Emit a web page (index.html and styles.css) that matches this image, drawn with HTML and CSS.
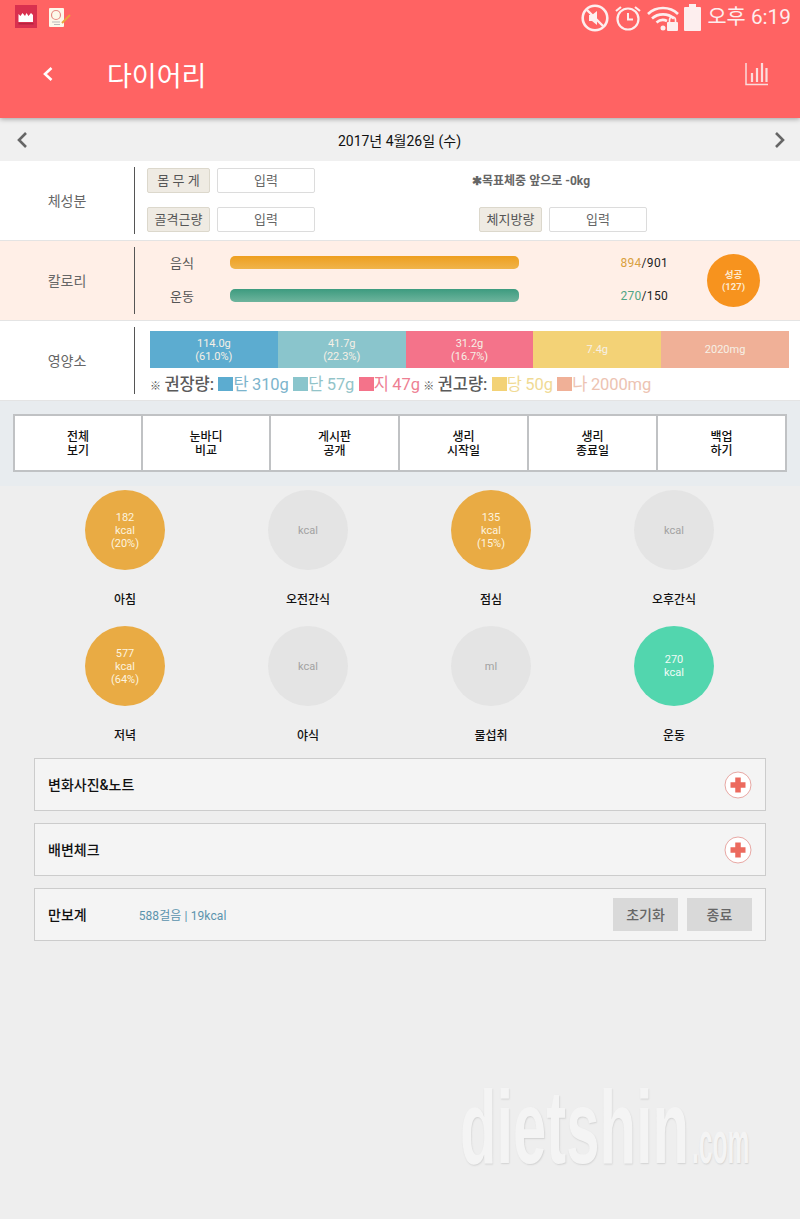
FILE: index.html
```html
<!DOCTYPE html>
<html lang="ko">
<head>
    <meta charset="UTF-8">
    <meta name="viewport" content="width=device-width, initial-scale=1.0">
    <title>다이어리</title>
    <link rel="stylesheet" href="styles.css">
</head>
<body>
    <header class="app-header">
        <div class="status-bar">
            <div class="status-left">
                <svg class="notify-crown" width="22" height="23" viewBox="0 0 22 23">
                    <rect width="22" height="23" fill="#d9304f"/>
                    <path d="M3.500 9l2 2 2-3 2.500 3 1.500-3 2 3 2.500-3 2 2v7h-14.500z" fill="#fff"/>
                    <rect x="3.500" y="18" width="15" height="1.500" fill="#b52540"/>
                </svg>
                <svg class="notify-note" width="24" height="23" viewBox="0 0 24 23">
                    <rect x="1" y="3" width="15" height="19" rx="1" fill="#fdf8ea"/>
                    <circle cx="8" cy="10" r="4.500" fill="none" stroke="#e58a84" stroke-width="1.200"/>
                    <path d="M4 17h8M6 19.500h6" stroke="#bbb" stroke-width="1"/>
                    <path d="M14 18l8-8" stroke="#e9a33c" stroke-width="2"/>
                </svg>
            </div>
            <div class="status-right">
                <svg width="28" height="28" viewBox="0 0 28 28">
                    <circle cx="14" cy="14" r="12.300" fill="none" stroke="#fdeeee" stroke-width="2.600"/>
                    <path d="M8 11h3l5-4v14l-5-4H8z" fill="#fdeeee"/>
                    <path d="M6 6l16 16" stroke="#fdeeee" stroke-width="2.400"/>
                </svg>
                <svg width="28" height="28" viewBox="0 0 28 28">
                    <circle cx="14" cy="15" r="10.500" fill="none" stroke="#fdeeee" stroke-width="2.200"/>
                    <path d="M14 9v6.500h5" fill="none" stroke="#fdeeee" stroke-width="2"/>
                    <path d="M2 7l5-4M26 7l-5-4" stroke="#fdeeee" stroke-width="2.200"/>
                </svg>
                <svg width="32" height="28" viewBox="0 0 32 28">
                    <path d="M1 10C9 2 23 2 31 10" fill="none" stroke="#fdeeee" stroke-width="2.600"/>
                    <path d="M5 14.500C11 9 21 9 27 14.500" fill="none" stroke="#fdeeee" stroke-width="2.600"/>
                    <path d="M9.500 18.500C13 15.500 17 15.500 20 17" fill="none" stroke="#fdeeee" stroke-width="2.600"/>
                    <circle cx="16" cy="24" r="2.500" fill="#fdeeee"/>
                    <rect x="20" y="18" width="11" height="9" rx="1" fill="#fdeeee"/>
                    <path d="M22.500 18v-2a3 3 0 0 1 6 0v2" fill="none" stroke="#fdeeee" stroke-width="1.600"/>
                </svg>
                <svg class="battery" width="17" height="27" viewBox="0 0 17 27">
                    <path d="M5 0h7v3h4a1 1 0 0 1 1 1v22a1 1 0 0 1-1 1H1a1 1 0 0 1-1-1V4a1 1 0 0 1 1-1h4z" fill="#fdeeee"/>
                </svg>
                <span class="clock">오후 6:19</span>
            </div>
        </div>
        <div class="toolbar">
            <svg class="back-icon" width="12" height="16" viewBox="0 0 12 16">
                <path d="M9.500 2L3 8l6.500 6" fill="none" stroke="#fff" stroke-width="2.600"/>
            </svg>
            <h1>다이어리</h1>
            <svg class="chart-icon" width="25" height="24" viewBox="0 0 25 24">
                <path d="M2 1v21.500h22" fill="none" stroke="#fbdcdc" stroke-width="1.500"/>
                <path d="M8 11v9M13 6v14M18 1v19M22.500 6v14" fill="none" stroke="#fbdcdc" stroke-width="2.200"/>
            </svg>
        </div>
    </header>

    <nav class="date-bar">
        <svg width="12" height="18" viewBox="0 0 12 18">
            <path d="M10 2L3 9l7 7" fill="none" stroke="#666" stroke-width="2.600"/>
        </svg>
        <span>2017년 4월26일 (수)</span>
        <svg width="12" height="18" viewBox="0 0 12 18">
            <path d="M2 2l7 7-7 7" fill="none" stroke="#666" stroke-width="2.600"/>
        </svg>
    </nav>

    <section class="info-row">
        <div class="row-label">체성분</div>
        <div class="body-grid">
            <div class="field">
                <span class="field-name">몸 무 게</span>
                <span class="field-input">입력</span>
            </div>
            <div class="goal-note">✱목표체중 앞으로 -0kg</div>
            <div class="field">
                <span class="field-name">골격근량</span>
                <span class="field-input">입력</span>
            </div>
            <div class="field">
                <span class="field-name">체지방량</span>
                <span class="field-input">입력</span>
            </div>
        </div>
    </section>

    <section class="info-row calorie-row">
        <div class="row-label">칼로리</div>
        <div class="calorie-bars">
            <div class="calorie-line">
                <span class="calorie-name">음식</span>
                <div class="bar bar-food"></div>
                <span class="calorie-value"><em class="food-num">894</em>/901</span>
            </div>
            <div class="calorie-line">
                <span class="calorie-name">운동</span>
                <div class="bar bar-exercise"></div>
                <span class="calorie-value"><em class="exercise-num">270</em>/150</span>
            </div>
        </div>
        <div class="success-badge">성공<br>(127)</div>
    </section>

    <section class="info-row">
        <div class="row-label">영양소</div>
        <div class="nutrients">
            <div class="nutrient-bar">
                <div class="carb">114.0g<br>(61.0%)</div>
                <div class="protein">41.7g<br>(22.3%)</div>
                <div class="fat">31.2g<br>(16.7%)</div>
                <div class="sugar">7.4g</div>
                <div class="sodium">2020mg</div>
            </div>
            <p class="legend">
                <small>※</small> <b>권장량:</b>
                <i class="swatch carb"></i><span class="t-carb">탄 310g</span>
                <i class="swatch protein"></i><span class="t-protein">단 57g</span>
                <i class="swatch fat"></i><span class="t-fat">지 47g</span>
                <small>※</small> <b>권고량:</b>
                <i class="swatch sugar"></i><span class="t-sugar">당 50g</span>
                <i class="swatch sodium"></i><span class="t-sodium">나 2000mg</span>
            </p>
        </div>
    </section>

    <section class="menu-band">
        <div class="menu-table">
            <div>전체<br>보기</div>
            <div>눈바디<br>비교</div>
            <div>게시판<br>공개</div>
            <div>생리<br>시작일</div>
            <div>생리<br>종료일</div>
            <div>백업<br>하기</div>
        </div>
    </section>

    <main class="content">
        <div class="meal-grid">
            <div class="meal">
                <div class="circle filled">182<br>kcal<br>(20%)</div>
                <span>아침</span>
            </div>
            <div class="meal">
                <div class="circle">kcal</div>
                <span>오전간식</span>
            </div>
            <div class="meal">
                <div class="circle filled">135<br>kcal<br>(15%)</div>
                <span>점심</span>
            </div>
            <div class="meal">
                <div class="circle">kcal</div>
                <span>오후간식</span>
            </div>
            <div class="meal">
                <div class="circle filled">577<br>kcal<br>(64%)</div>
                <span>저녁</span>
            </div>
            <div class="meal">
                <div class="circle">kcal</div>
                <span>야식</span>
            </div>
            <div class="meal">
                <div class="circle">ml</div>
                <span>물섭취</span>
            </div>
            <div class="meal">
                <div class="circle green">270<br>kcal</div>
                <span>운동</span>
            </div>
        </div>

        <div class="panel">
            <strong>변화사진&amp;노트</strong>
            <svg class="plus" width="28" height="28" viewBox="0 0 28 28">
                <circle cx="14" cy="14" r="13" fill="#fff" stroke="#e8a8a4" stroke-width="1"/>
                <path d="M14 6.500v15M6.500 14h15" stroke="#ec6a5e" stroke-width="5.500"/>
            </svg>
        </div>
        <div class="panel">
            <strong>배변체크</strong>
            <svg class="plus" width="28" height="28" viewBox="0 0 28 28">
                <circle cx="14" cy="14" r="13" fill="#fff" stroke="#e8a8a4" stroke-width="1"/>
                <path d="M14 6.500v15M6.500 14h15" stroke="#ec6a5e" stroke-width="5.500"/>
            </svg>
        </div>
        <div class="panel pedometer">
            <strong>만보계</strong>
            <span class="steps">588걸음 | 19kcal</span>
            <button class="gray-btn">초기화</button>
            <button class="gray-btn">종료</button>
        </div>

        <div class="watermark"><span class="wm-main">dietshin</span><span class="wm-com">.com</span></div>
    </main>
</body>
</html>
```

FILE: styles.css
```css
* {
    margin: 0;
    padding: 0;
    box-sizing: border-box;
}

body {
    width: 800px;
    height: 1219px;
    overflow: hidden;
    background: #eeeeee;
    font-family: Roboto, "Noto Sans CJK KR", sans-serif;
    color: #222;
}

/* header */
.app-header {
    position: relative;
    height: 118px;
    background: #ff6363;
    box-shadow: 0 1px 5px rgba(0,0,0,0.35);
}

.status-bar {
    display: flex;
    justify-content: space-between;
    height: 33px;
    padding: 4px 9px 0 15px;
}

.status-left {
    display: flex;
    gap: 11px;
    height: 23px;
    margin-top: 1px;
}

.status-right {
    display: flex;
    align-items: flex-start;
    gap: 5px;
    color: #fdeeee;
}

.clock {
    margin-left: 1px;
    font-size: 20.800px;
    line-height: 27px;
}

.toolbar {
    display: flex;
    align-items: center;
    height: 85px;
    padding: 0 31px 3px 42px;
}

.toolbar h1 {
    margin-left: 53px;
    font-size: 27px;
    font-weight: 400;
    color: #fff;
}

.chart-icon {
    margin-left: auto;
}

/* date */
.date-bar {
    display: flex;
    justify-content: space-between;
    align-items: center;
    height: 43px;
    padding: 1px 14px 0 16px;
    background: #f0f0f0;
    font-size: 14px;
    color: #111;
}

.date-bar span {
    margin-left: -3px;
    padding-bottom: 1px;
}

/* rows */
.info-row {
    display: flex;
    height: 80px;
    padding: 6px 0;
    background: #fff;
    border-bottom: 1px solid #e4e4e4;
}

.row-label {
    flex: 0 0 135px;
    padding-top: 1px;
    border-right: 1px solid #555;
    font-size: 14px;
    line-height: 67px;
    text-align: center;
    color: #666;
}

.body-grid {
    display: grid;
    grid-template-columns: 332px 310px;
    grid-template-rows: 25px 25px;
    row-gap: 14px;
    padding: 1px 0 0 12px;
}

.field {
    display: flex;
    gap: 7px;
    font-size: 13px;
    line-height: 23px;
    text-align: center;
    color: #666;
}

.field-name {
    width: 63px;
    background: #efebe3;
    border: 1px solid #dcd8cc;
    border-radius: 2px;
    color: #555;
}

.field-input {
    width: 98px;
    background: #fff;
    border: 1px solid #dcdcdc;
    border-radius: 2px;
}

.goal-note {
    margin-left: -7px;
    font-size: 12px;
    font-weight: 700;
    line-height: 26px;
    color: #666;
}

.calorie-row {
    background: #ffefe7;
}

.calorie-bars {
    display: flex;
    flex-direction: column;
    gap: 13px;
    padding-top: 5px;
}

.calorie-line {
    display: flex;
    align-items: center;
    height: 20px;
    font-size: 13px;
}

.calorie-name {
    width: 95px;
    padding-left: 35px;
    color: #555;
}

.bar {
    width: 289px;
    height: 13px;
    border-radius: 5px;
}

.bar-food {
    background: linear-gradient(#ee9f1f, #f0b44a);
}

.bar-exercise {
    background: linear-gradient(#3d9b7f, #6eb49d);
}

.calorie-value {
    width: 149px;
    padding-top: 2px;
    text-align: right;
    font-size: 12px;
    letter-spacing: 0.3px;
    color: #222;
}

.calorie-value em {
    font-style: normal;
}

.food-num {
    color: #d9a040;
}

.exercise-num {
    color: #4fa585;
}

.success-badge {
    flex: 0 0 53px;
    height: 53px;
    margin: 7px 0 0 39px;
    padding-top: 15px;
    background: #f7931e;
    border-radius: 50%;
    font-size: 9.500px;
    font-weight: 700;
    line-height: 12px;
    text-align: center;
    color: #fde9cf;
}

.nutrients {
    padding: 4px 0 0 15px;
}

.nutrient-bar {
    display: flex;
    width: 639px;
    height: 37px;
    font-size: 11px;
    line-height: 13px;
    text-align: center;
    color: #f6f0e6;
}

.nutrient-bar div {
    flex: 1;
    display: flex;
    align-items: center;
    justify-content: center;
}

.carb { background: #5cacd0; }
.protein { background: #8ac5cc; }
.fat { background: #f4738a; }
.sugar { background: #f3d276; }
.sodium { background: #f0b097; }

.legend {
    margin-top: 6px;
    font-size: 16.500px;
    line-height: 21px;
    white-space: nowrap;
    letter-spacing: -0.1px;
    word-spacing: -0.5px;
}

.legend small {
    font-size: 11px;
    color: #555;
}

.legend b {
    font-weight: 500;
    color: #5a5a5a;
}

.swatch {
    display: inline-block;
    width: 15px;
    height: 14px;
    margin-left: 1px;
    vertical-align: -1px;
}

.t-carb { color: #7cb4cc; }
.t-protein { color: #93c4c9; }
.t-fat { color: #ee7f93; }
.t-sugar { color: #f0da94; }
.t-sodium { color: #edc3b2; }

/* menu buttons */
.menu-band {
    height: 85px;
    padding: 13px 13px 0;
    background: #e8ecef;
}

.menu-table {
    display: grid;
    grid-template-columns: 128px 128px 129px 129px 129px 1fr;
    width: 774px;
    height: 58px;
    background: #fff;
    border: 2px solid #c0c2c4;
}

.menu-table div {
    display: flex;
    align-items: center;
    justify-content: center;
    padding-top: 2px;
    border-right: 2px solid #c0c2c4;
    font-size: 12px;
    font-weight: 500;
    line-height: 14px;
    text-align: center;
    color: #111;
}

.menu-table div:last-child {
    border-right: none;
}

/* meals */
.content {
    padding: 4px 34px 0;
}

.meal-grid {
    display: grid;
    grid-template-columns: repeat(4, 183px);
    grid-auto-rows: 136px;
    width: 732px;
    margin-left: -1px;
}

.meal {
    display: flex;
    flex-direction: column;
    align-items: center;
    font-size: 12px;
    font-weight: 500;
    color: #111;
}

.meal span {
    margin-top: 21px;
    padding-left: 1px;
    line-height: 18px;
}

.circle {
    display: flex;
    align-items: center;
    justify-content: center;
    width: 80px;
    height: 80px;
    padding-left: 1px;
    border-radius: 50%;
    background: #e4e4e4;
    font-size: 11px;
    font-weight: 400;
    line-height: 13px;
    text-align: center;
    color: #a2a2a2;
}

.circle.filled {
    background: #e9ab44;
    color: #fdf3df;
}

.circle.green {
    background: #52d6ae;
    color: #f0fbf6;
}

/* panels */
.panel {
    display: flex;
    align-items: center;
    height: 53px;
    margin-bottom: 12px;
    padding: 0 13px;
    background: #f4f4f4;
    border: 1px solid #cccccc;
    font-size: 14px;
    color: #111;
}

.panel strong {
    padding-bottom: 2px;
    font-weight: 500;
}

.meal-grid + .panel {
    margin-top: -4px;
}

.plus {
    margin-left: auto;
}

.steps {
    margin-left: 52px;
    padding-bottom: 1px;
    font-size: 12px;
    letter-spacing: 0.1px;
    color: #5b93ad;
}

.gray-btn {
    width: 65px;
    height: 33px;
    padding-bottom: 2px;
    background: #d9d9d9;
    border: none;
    font-family: inherit;
    font-size: 14px;
    font-weight: 500;
    color: #666;
}

.steps + .gray-btn {
    margin-left: auto;
}

.gray-btn + .gray-btn {
    margin-left: 9px;
}

/* watermark */
.watermark {
    display: flex;
    align-items: baseline;
    height: 90px;
    margin: 142px 0 0 426px;
    font-family: "Liberation Sans", sans-serif;
    font-weight: 700;
    color: #f4f4f4;
    text-shadow: 1px 1px 2px #d2d2d2;
    white-space: nowrap;
}

.wm-main {
    display: inline-block;
    width: 232px;
    font-size: 103px;
    line-height: 90px;
    transform: scaleX(0.58);
    transform-origin: left bottom;
}

.wm-com {
    display: inline-block;
    font-size: 60px;
    line-height: 90px;
    transform: scaleX(0.41);
    transform-origin: left bottom;
}
```
